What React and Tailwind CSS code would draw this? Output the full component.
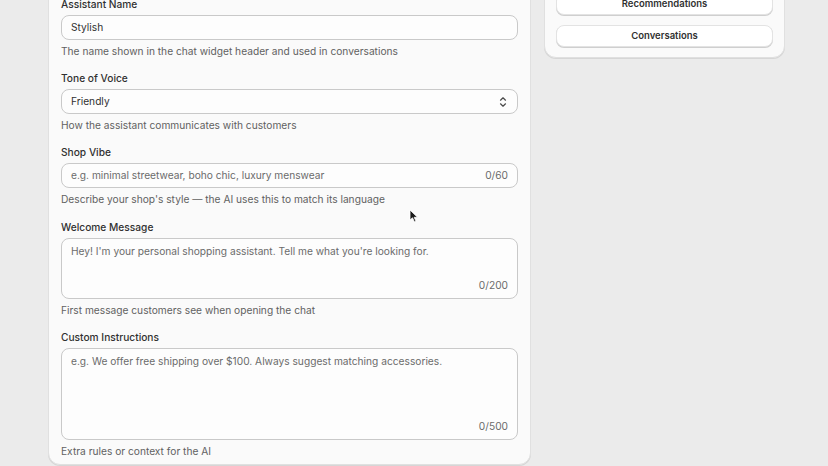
import React from "react";

function Field({ label, helper, children }) {
  return (
    <div className="flex flex-col">
      <div className="text-[10.2px] leading-[14px] font-medium text-[#303030]">{label}</div>
      <div className="mt-[4px]">{children}</div>
      <div className="mt-[4px] text-[10.2px] leading-[14px] text-[#616161]">{helper}</div>
    </div>
  );
}

function SelectIcon() {
  return (
    <svg width="8" height="12" viewBox="0 0 8 12" fill="none" stroke="#4a4a4a" strokeWidth="1.2" strokeLinecap="round" strokeLinejoin="round">
      <path d="M1.5 4.2 L4 1.8 L6.5 4.2" />
      <path d="M1.5 7.8 L4 10.2 L6.5 7.8" />
    </svg>
  );
}

export default function App() {
  return (
    <div className="relative h-[466px] w-[828px] overflow-hidden bg-[#ebebeb] font-['Inter',sans-serif]">
      <div className="-mt-[60px] flex items-start gap-[13px] pl-[48px]">
        {/* Left card */}
        <div className="w-[483px] rounded-[12px] border border-[#e0e0e0] bg-[#fafafa] px-[12px] pt-[56px] pb-[6px] shadow-[0_1px_0_#d6d6d6]">
          <div className="flex flex-col gap-[13.2px]">
            <Field label="Assistant Name" helper="The name shown in the chat widget header and used in conversations">
              <div className="flex h-[25px] items-center rounded-[8px] border border-[#c9c9c9] bg-[#fdfdfd] px-[9px] text-[10.2px] text-[#303030]">
                Stylish
              </div>
            </Field>
            <Field label="Tone of Voice" helper="How the assistant communicates with customers">
              <div className="flex h-[25px] items-center justify-between rounded-[8px] border border-[#c9c9c9] bg-[#fdfdfd] pl-[9px] pr-[10px] text-[10.2px] text-[#303030]">
                <span>Friendly</span>
                <SelectIcon />
              </div>
            </Field>
            <Field label="Shop Vibe" helper="Describe your shop's style — the AI uses this to match its language">
              <div className="flex h-[25px] items-center justify-between rounded-[8px] border border-[#c9c9c9] bg-[#fdfdfd] px-[9px] text-[10.2px] text-[#6b6b6b]">
                <span>e.g. minimal streetwear, boho chic, luxury menswear</span>
                <span>0/60</span>
              </div>
            </Field>
            <Field label="Welcome Message" helper="First message customers see when opening the chat">
              <div className="flex h-[61px] flex-col justify-between rounded-[8px] border border-[#c9c9c9] bg-[#fdfdfd] px-[9px] pt-[5px] pb-[6px] text-[10.2px] leading-[14px] text-[#6b6b6b]">
                <span>Hey! I'm your personal shopping assistant. Tell me what you're looking for.</span>
                <span className="self-end">0/200</span>
              </div>
            </Field>
            <Field label="Custom Instructions" helper="Extra rules or context for the AI">
              <div className="flex h-[92px] flex-col justify-between rounded-[8px] border border-[#c9c9c9] bg-[#fdfdfd] px-[9px] pt-[5px] pb-[6px] text-[10.2px] leading-[14px] text-[#6b6b6b]">
                <span>e.g. We offer free shipping over $100. Always suggest matching accessories.</span>
                <span className="self-end">0/500</span>
              </div>
            </Field>
          </div>
        </div>

        {/* Right card */}
        <div className="w-[241px] rounded-[12px] border border-[#e0e0e0] bg-[#fafafa] px-[11px] pt-[52px] pb-[10px] shadow-[0_1px_0_#d6d6d6]">
          <div className="flex flex-col gap-[10px]">
            <div className="flex h-[22px] items-center justify-center rounded-[8px] border border-[#e3e3e3] bg-white text-[9.5px] font-semibold text-[#303030] shadow-[0_1px_0_#cfcfcf]">
              Recommendations
            </div>
            <div className="flex h-[22px] items-center justify-center rounded-[8px] border border-[#e3e3e3] bg-white text-[9.5px] font-semibold text-[#303030] shadow-[0_1px_0_#cfcfcf]">
              Conversations
            </div>
          </div>
        </div>
      </div>

      {/* mouse cursor */}
      <svg className="absolute left-[409px] top-[209px]" width="10" height="14" viewBox="0 0 10 14">
        <path d="M1 1 L1 11 L3.5 8.8 L5.5 13 L7 12.3 L5.2 8.3 L8.5 8.3 Z" fill="#1a1a1a" stroke="#ffffff" strokeWidth="0.8" strokeLinejoin="round" />
      </svg>
    </div>
  );
}
